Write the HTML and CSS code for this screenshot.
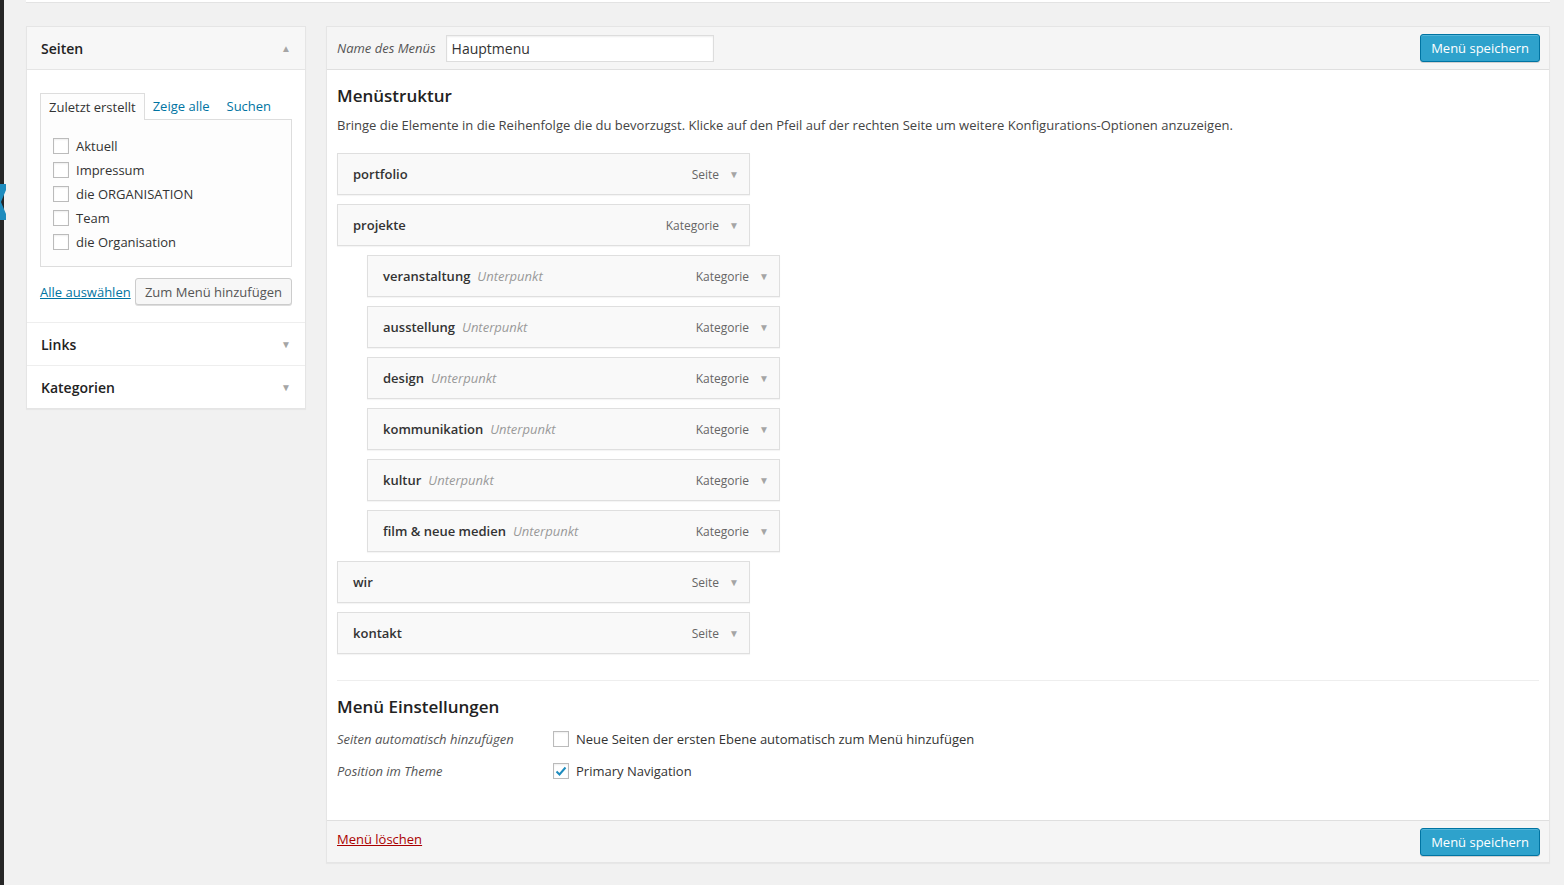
FILE: index.html
```html
<!DOCTYPE html>
<html lang="de">
<head>
  <meta charset="UTF-8" />
  <title>Menüs</title>
  <link rel="stylesheet" href="styles.css">
</head>
<body>
  <div class="adminbar-edge">
    <svg class="current-marker" width="6" height="36" viewBox="0 0 6 36"><path d="M0 0 L6 0 L6 6 L1 18 L6 30 L6 36 L0 36 Z" fill="#1e8cbe"/></svg>
  </div>

  <div class="wrap">
    <div class="top-strip"></div>

    <div class="columns">
      <!-- left column: meta boxes to pick items -->
      <div class="side">
        <div class="box">
          <div class="box-head open">
            <span>Seiten</span>
            <span class="arrow up">&#9650;</span>
          </div>
          <div class="box-body">
            <div class="tabs">
              <span class="tab active">Zuletzt erstellt</span>
              <span class="tab">Zeige alle</span>
              <span class="tab">Suchen</span>
            </div>
            <div class="tab-panel">
              <label class="check"><span class="cb"></span>Aktuell</label>
              <label class="check"><span class="cb"></span>Impressum</label>
              <label class="check"><span class="cb"></span>die ORGANISATION</label>
              <label class="check"><span class="cb"></span>Team</label>
              <label class="check"><span class="cb"></span>die Organisation</label>
            </div>
            <div class="box-actions">
              <a href="#" class="select-all">Alle auswählen</a>
              <button class="btn">Zum Menü hinzufügen</button>
            </div>
          </div>
          <div class="box-head">
            <span>Links</span>
            <span class="arrow">&#9660;</span>
          </div>
          <div class="box-head">
            <span>Kategorien</span>
            <span class="arrow">&#9660;</span>
          </div>
        </div>
      </div>

      <!-- right column: menu editor -->
      <div class="editor">
        <div class="editor-head">
          <label class="name-label">Name des Menüs</label>
          <input class="name-input" type="text" value="Hauptmenu" />
          <button class="btn-primary">Menü speichern</button>
        </div>

        <div class="editor-body">
          <h3>Menüstruktur</h3>
          <p class="desc">Bringe die Elemente in die Reihenfolge die du bevorzugst. Klicke auf den Pfeil auf der rechten Seite um weitere Konfigurations-Optionen anzuzeigen.</p>

          <ul class="menu-items">
            <li class="item"><span class="title">portfolio</span><span class="type">Seite</span><span class="arrow">&#9660;</span></li>
            <li class="item"><span class="title">projekte</span><span class="type">Kategorie</span><span class="arrow">&#9660;</span></li>
            <li class="item depth-1"><span class="title">veranstaltung</span><span class="sub">Unterpunkt</span><span class="type">Kategorie</span><span class="arrow">&#9660;</span></li>
            <li class="item depth-1"><span class="title">ausstellung</span><span class="sub">Unterpunkt</span><span class="type">Kategorie</span><span class="arrow">&#9660;</span></li>
            <li class="item depth-1"><span class="title">design</span><span class="sub">Unterpunkt</span><span class="type">Kategorie</span><span class="arrow">&#9660;</span></li>
            <li class="item depth-1"><span class="title">kommunikation</span><span class="sub">Unterpunkt</span><span class="type">Kategorie</span><span class="arrow">&#9660;</span></li>
            <li class="item depth-1"><span class="title">kultur</span><span class="sub">Unterpunkt</span><span class="type">Kategorie</span><span class="arrow">&#9660;</span></li>
            <li class="item depth-1"><span class="title">film &amp; neue medien</span><span class="sub">Unterpunkt</span><span class="type">Kategorie</span><span class="arrow">&#9660;</span></li>
            <li class="item"><span class="title">wir</span><span class="type">Seite</span><span class="arrow">&#9660;</span></li>
            <li class="item"><span class="title">kontakt</span><span class="type">Seite</span><span class="arrow">&#9660;</span></li>
          </ul>

          <div class="settings">
            <h3>Menü Einstellungen</h3>
            <div class="setting-row">
              <span class="setting-label">Seiten automatisch hinzufügen</span>
              <label class="check"><span class="cb"></span>Neue Seiten der ersten Ebene automatisch zum Menü hinzufügen</label>
            </div>
            <div class="setting-row">
              <span class="setting-label">Position im Theme</span>
              <label class="check"><span class="cb checked"><svg width="12" height="10" viewBox="0 0 12 10"><path d="M1.5 5.5 L4.5 8.5 L10.5 1.5" fill="none" stroke="#1e8cbe" stroke-width="2"/></svg></span>Primary Navigation</label>
            </div>
          </div>
        </div>

        <div class="editor-foot">
          <a href="#" class="delete">Menü löschen</a>
          <button class="btn-primary">Menü speichern</button>
        </div>
      </div>
    </div>
  </div>
</body>
</html>
```

FILE: styles.css
```css
body {
  margin: 0;
  font-family: 'Open Sans', 'Liberation Sans', sans-serif;
  font-size: 13px;
  color: #444;
  background: #f1f1f1;
  display: flex;
  min-height: 885px;
}
.adminbar-edge {
  width: 4px;
  background: #262626;
  position: relative;
  flex-shrink: 0;
}
.current-marker {
  position: absolute;
  left: 0;
  top: 184px;
}
.wrap {
  flex: 1;
  padding: 0 14px 0 22px;
}
.top-strip {
  height: 2px;
  background: #fff;
  border-bottom: 1px solid #e3e3e3;
}
.columns {
  display: flex;
  gap: 20px;
  margin-top: 23px;
  align-items: flex-start;
}

/* left column */
.side {
  width: 280px;
  flex-shrink: 0;
}
.box {
  background: #fff;
  border: 1px solid #e5e5e5;
  box-shadow: 0 1px 1px rgba(0,0,0,0.04);
}
.box-head {
  height: 42px;
  display: flex;
  align-items: center;
  justify-content: space-between;
  padding: 0 14px 0 14px;
  font-size: 14px;
  font-weight: 600;
  color: #222;
  border-top: 1px solid #eee;
}
.box-head:first-child {
  border-top: none;
}
.box-head.open {
  background: #f7f7f7;
  border-bottom: 1px solid #e5e5e5;
}
.arrow {
  color: #a5a5a5;
  font-size: 10px;
}
.box-body {
  padding: 23px 13px 17px 13px;
}
.tabs {
  display: flex;
  height: 26px;
  align-items: stretch;
}
.tab {
  padding: 0 9px;
  display: flex;
  align-items: center;
  color: #0074a2;
}
.tab + .tab {
  padding: 0 9px 0 8px;
}
.tab.active {
  color: #333;
  border: 1px solid #ddd;
  border-bottom: none;
  background: #fdfdfd;
  margin-bottom: -1px;
  padding: 0 8px;
  position: relative;
}
.tab-panel {
  border: 1px solid #ddd;
  background: #fdfdfd;
  padding: 14px 12px 12px 12px;
}
.check {
  display: flex;
  align-items: center;
  height: 24px;
  color: #333;
}
.cb {
  width: 14px;
  height: 14px;
  border: 1px solid #bbb;
  background: #fff;
  box-shadow: inset 0 1px 2px rgba(0,0,0,0.07);
  margin-right: 7px;
  display: flex;
  align-items: center;
  justify-content: center;
}
.box-actions {
  display: flex;
  justify-content: space-between;
  align-items: center;
  margin-top: 11px;
}
.select-all {
  color: #0074a2;
}
.btn {
  font-family: inherit;
  font-size: 13px;
  color: #555;
  background: #f7f7f7;
  border: 1px solid #ccc;
  border-radius: 3px;
  box-shadow: 0 1px 0 #ddd;
  height: 27px;
  padding: 0 9px;
}

/* menu editor */
.editor {
  flex: 1;
  background: #fff;
  border: 1px solid #e5e5e5;
  box-shadow: 0 1px 1px rgba(0,0,0,0.04);
}
.editor-head {
  display: flex;
  align-items: center;
  height: 42px;
  padding: 0 9px 0 10px;
  background: #f5f5f5;
  border-bottom: 1px solid #dfdfdf;
}
.name-label {
  font-style: italic;
  font-size: 13px;
  color: #555;
  margin-right: 10px;
}
.name-input {
  font-family: inherit;
  font-size: 14px;
  color: #333;
  width: 268px;
  height: 27px;
  box-sizing: border-box;
  border: 1px solid #ddd;
  box-shadow: inset 0 1px 2px rgba(0,0,0,0.07);
  padding: 0 5px;
}
.btn-primary {
  margin-left: auto;
  font-family: inherit;
  font-size: 13px;
  color: #fff;
  background: #2ea2cc;
  border: 1px solid #0074a2;
  border-radius: 3px;
  box-shadow: inset 0 1px 0 rgba(120,200,230,0.5), 0 1px 0 rgba(0,0,0,0.15);
  height: 28px;
  padding: 0 10px;
}
.editor-body {
  padding: 13px 10px 0 10px;
  height: 750px;
  box-sizing: border-box;
}
h3 {
  margin: 0;
  font-size: 17px;
  font-weight: 600;
  color: #222;
  line-height: 26px;
}
.desc {
  margin: 7px 0 0 0;
  color: #444;
  line-height: 18px;
}
.menu-items {
  list-style: none;
  margin: 19px 0 0 0;
  padding: 0;
}
.item {
  width: 413px;
  height: 42px;
  box-sizing: border-box;
  margin-bottom: 9px;
  display: flex;
  align-items: center;
  padding: 0 10px 0 15px;
  background: #f9f9f9;
  border: 1px solid #dfdfdf;
  box-shadow: 0 1px 1px rgba(0,0,0,0.04);
}
.item.depth-1 {
  margin-left: 30px;
}
.item .title {
  font-weight: 600;
  color: #333;
}
.item .sub {
  font-style: italic;
  color: #999;
  margin-left: 7px;
}
.item .type {
  margin-left: auto;
  color: #666;
  font-size: 12px;
  margin-right: 10px;
}
.settings {
  margin-top: 26px;
  border-top: 1px solid #eee;
  padding-top: 13px;
}
.setting-row {
  display: flex;
  align-items: center;
  height: 32px;
}
.setting-row:first-of-type {
  margin-top: 3px;
}
.setting-label {
  width: 216px;
  font-style: italic;
  font-size: 13px;
  color: #555;
}
.editor-foot {
  height: 41px;
  display: flex;
  align-items: center;
  padding: 0 9px 0 10px;
  background: #f5f5f5;
  border-top: 1px solid #dfdfdf;
}
.delete {
  color: #a00;
  margin-top: -6px;
}
```
